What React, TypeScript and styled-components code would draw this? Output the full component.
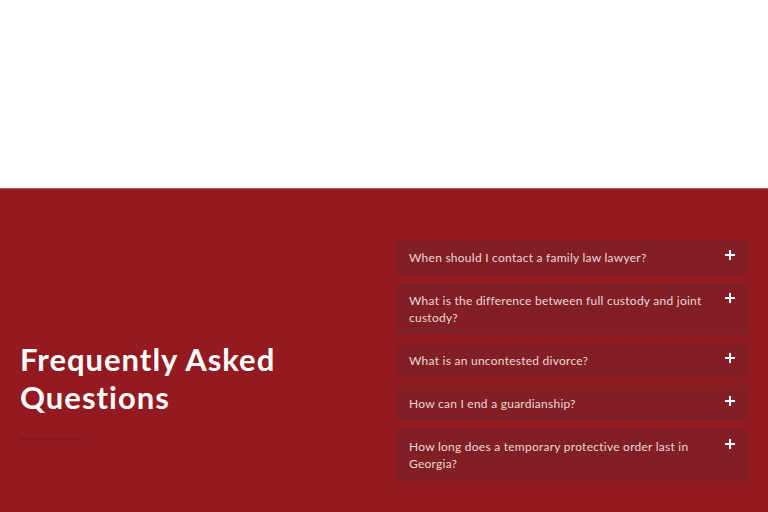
import styled, { createGlobalStyle } from 'styled-components'

const faqs = [
  'When should I contact a family law lawyer?',
  'What is the difference between full custody and joint custody?',
  'What is an uncontested divorce?',
  'How can I end a guardianship?',
  'How long does a temporary protective order last in Georgia?',
]

export default function App() {
  return (
    <>
      <GlobalStyle />
      <Page>
        <TopSpace />
        <FaqSection>
          <Intro>
            <Title>Frequently Asked Questions</Title>
            <Underline />
          </Intro>
          <List>
            {faqs.map(q => (
              <Item key={q}>
                <Question>{q}</Question>
                <Plus />
              </Item>
            ))}
          </List>
        </FaqSection>
      </Page>
    </>
  )
}

const GlobalStyle = createGlobalStyle`
  html, body {
    margin: 0;
    padding: 0;
    background: #fff;
  }
  body {
    font-family: Lato, "Open Sans", "Liberation Sans", sans-serif;
  }
`

const Page = styled.div`
  width: 768px;
  height: 512px;
  overflow: hidden;
  display: flex;
  flex-direction: column;
`

const TopSpace = styled.div`
  height: 188px;
  flex-shrink: 0;
  background: #fff;
`

const FaqSection = styled.section`
  flex: 1;
  background: #921a20;
  border-top: 1px solid #b35a5e;
  display: grid;
  grid-template-columns: 377px 352px;
  padding: 51px 19px 0 20px;
`

const Intro = styled.div`
  display: flex;
  flex-direction: column;
  padding-top: 100px;
`

const Title = styled.h2`
  margin: 0;
  width: 300px;
  font-family: Lato, "Liberation Sans", sans-serif;
  font-weight: 700;
  font-size: 31px;
  letter-spacing: 1px;
  line-height: 38px;
  color: #fff;
`

const Underline = styled.div`
  margin-top: 22px;
  width: 63px;
  height: 2px;
  background: #7f1a1f;
`

const List = styled.div`
  display: flex;
  flex-direction: column;
  gap: 8px;
`

const Item = styled.div`
  display: flex;
  align-items: flex-start;
  justify-content: space-between;
  background: #811f24;
  padding: 9px 14px 9px 12px;
`

const Question = styled.div`
  max-width: 296px;
  font-size: 12px;
  line-height: 17px;
  letter-spacing: 0.25px;
  color: #ecd8da;
`

const Plus = styled.span`
  position: relative;
  width: 10px;
  height: 10px;
  margin-top: 1px;
  flex-shrink: 0;
  &::before,
  &::after {
    content: '';
    position: absolute;
    background: #fff;
  }
  &::before {
    left: 0;
    top: 4px;
    width: 10px;
    height: 2px;
  }
  &::after {
    left: 4px;
    top: 0;
    width: 2px;
    height: 10px;
  }
`
